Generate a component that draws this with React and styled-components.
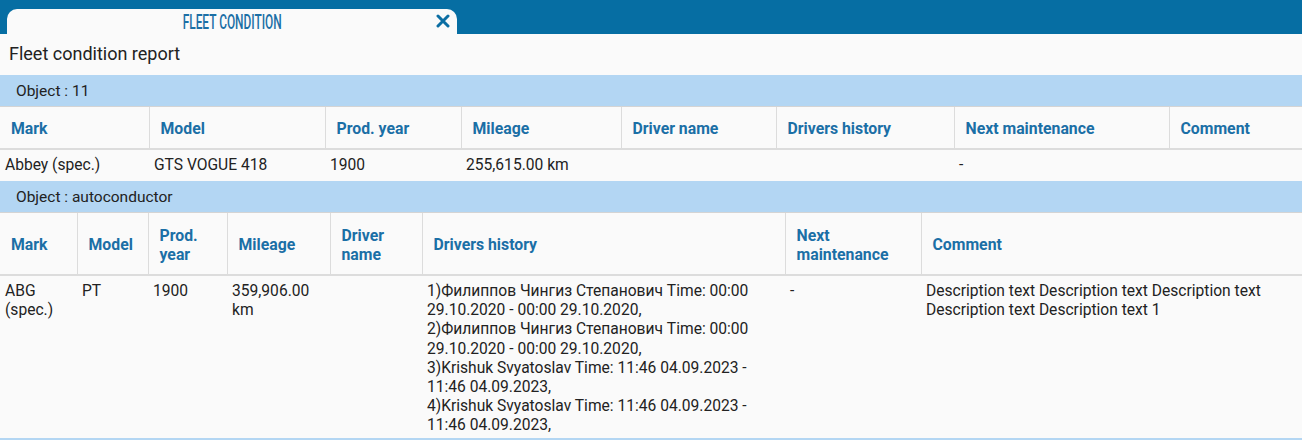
import styled, { createGlobalStyle } from "styled-components";

const GlobalStyle = createGlobalStyle`
  html, body {
    margin: 0;
    padding: 0;
    background: #fafafa;
  }
  body {
    font-family: Roboto, "Liberation Sans", sans-serif;
    color: #222;
  }
`;

const Page = styled.div`
  width: 1302px;
  height: 440px;
  overflow: hidden;
  background: #fafafa;
`;

const TopBar = styled.div`
  height: 34px;
  background: #066ea3;
  display: flex;
  align-items: flex-end;
  padding-left: 7px;
  box-sizing: border-box;
`;

const Tab = styled.div`
  width: 450px;
  height: 25px;
  background: #fafafa;
  border-radius: 10px 10px 0 0;
  display: flex;
  align-items: center;
  justify-content: center;
  position: relative;
`;

const TabTitle = styled.span`
  display: inline-block;
  font-family: Roboto, "Liberation Sans", sans-serif;
  font-size: 19.5px;
  font-weight: 500;
  color: #1b6fa6;
  text-transform: uppercase;
  transform: scaleX(0.61);
  white-space: nowrap;
  margin-top: 1px;
`;

const Close = styled.button`
  position: absolute;
  right: 7px;
  top: 5px;
  border: 0;
  padding: 0;
  background: none;
  display: flex;
  cursor: pointer;
`;

const ReportTitle = styled.h1`
  margin: 0;
  height: 41px;
  line-height: 40px;
  padding-left: 9px;
  font-size: 18px;
  font-weight: 400;
  color: #222;
`;

const Table = styled.table`
  width: 100%;
  border-collapse: collapse;
  table-layout: fixed;
  font-size: 15.6px;
`;

const ObjectRow = styled.td`
  background: #b3d6f3;
  height: 31px;
  padding: 0 0 0 16px;
  border-bottom: 1px solid #d4d4d4;
  font-size: 15.5px;
  color: #222;
`;

const Th = styled.th`
  text-align: left;
  vertical-align: middle;
  font-weight: 700;
  font-size: 15.8px;
  color: #1b6fa6;
  line-height: 19px;
  height: ${(p) => p.$h - 2}px;
  padding: 2px 6px 0 11px;
  border-right: 1px solid #dcdcdc;
  border-bottom: 2px solid #dcdcdc;
  &:last-child {
    border-right: 0;
  }
`;

const Td = styled.td`
  vertical-align: top;
  line-height: 19.2px;
  height: 23px;
  padding: 6px 6px 2px 5px;
  color: #222;
  border-bottom: ${(p) => (p.$last ? "2px solid #b3d6f3" : "0")};
`;

const Col = styled.col`
  width: ${(p) => p.$w}px;
`;

const groups = [
  {
    title: "Object : 11",
    headH: 41,
    cols: [149, 176, 136, 160, 155, 178, 215, 133],
    heads: ["Mark", "Model", "Prod. year", "Mileage", "Driver name", "Drivers history", "Next maintenance", "Comment"],
    row: ["Abbey (spec.)", "GTS VOGUE 418", "1900", "255,615.00 km", "", "", "-", ""],
  },
  {
    title: "Object : autoconductor",
    headH: 61,
    last: true,
    cols: [77, 71, 79, 103, 92, 363, 136, 381],
    heads: ["Mark", "Model", "Prod. year", "Mileage", "Driver name", "Drivers history", "Next maintenance", "Comment"],
    row: [
      "ABG (spec.)",
      "PT",
      "1900",
      "359,906.00 km",
      "",
      [
        "1)Филиппов Чингиз Степанович Time: 00:00 29.10.2020 - 00:00 29.10.2020,",
        "2)Филиппов Чингиз Степанович Time: 00:00 29.10.2020 - 00:00 29.10.2020,",
        "3)Krishuk Svyatoslav Time: 11:46 04.09.2023 - 11:46 04.09.2023,",
        "4)Krishuk Svyatoslav Time: 11:46 04.09.2023 - 11:46 04.09.2023,",
      ],
      "-",
      "Description text Description text Description text Description text Description text 1",
    ],
  },
];

const Group = ({ group }) => (
  <Table>
    <colgroup>
      {group.cols.map((w, i) => (
        <Col key={i} $w={w} />
      ))}
    </colgroup>
    <tbody>
      <tr>
        <ObjectRow colSpan={group.cols.length}>{group.title}</ObjectRow>
      </tr>
      <tr>
        {group.heads.map((h) => (
          <Th key={h} $h={group.headH}>
            {h}
          </Th>
        ))}
      </tr>
      <tr>
        {group.row.map((v, i) => (
          <Td key={i} $last={group.last}>
            {Array.isArray(v) ? v.map((line) => <div key={line}>{line}</div>) : v}
          </Td>
        ))}
      </tr>
    </tbody>
  </Table>
);

export default function App() {
  return (
    <Page>
      <GlobalStyle />
      <TopBar>
        <Tab>
          <TabTitle>Fleet condition</TabTitle>
          <Close aria-label="close">
            <svg width="14" height="14" viewBox="0 0 14 14">
              <path d="M2 2L12 12M12 2L2 12" stroke="#0b6ea3" strokeWidth="3" strokeLinecap="round" />
            </svg>
          </Close>
        </Tab>
      </TopBar>
      <ReportTitle>Fleet condition report</ReportTitle>
      {groups.map((g) => (
        <Group key={g.title} group={g} />
      ))}
    </Page>
  );
}
